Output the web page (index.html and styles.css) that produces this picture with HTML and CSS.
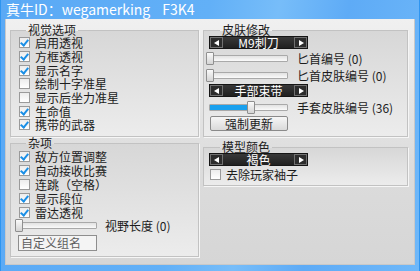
FILE: index.html
```html
<!DOCTYPE html>
<html lang="zh-CN">
<head>
  <meta charset="UTF-8">
  <title>真牛ID</title>
  <link rel="stylesheet" href="styles.css">
</head>
<body>
  <div class="window">
    <div class="titlebar"><span>真牛ID：wegamerking</span><span class="code">F3K4</span></div>

    <div class="client">
      <!-- Left column -->
      <div class="col col-left">
        <fieldset class="group group-visual">
          <legend>视觉选项</legend>
          <div class="check on"><span class="box"></span>启用透视</div>
          <div class="check on"><span class="box"></span>方框透视</div>
          <div class="check on"><span class="box"></span>显示名字</div>
          <div class="check"><span class="box"></span>绘制十字准星</div>
          <div class="check"><span class="box"></span>显示后坐力准星</div>
          <div class="check on"><span class="box"></span>生命值</div>
          <div class="check on"><span class="box"></span>携带的武器</div>
        </fieldset>

        <fieldset class="group group-misc">
          <legend>杂项</legend>
          <div class="check on"><span class="box"></span>敌方位置调整</div>
          <div class="check on"><span class="box"></span>自动接收比赛</div>
          <div class="check"><span class="box"></span>连跳（空格）</div>
          <div class="check on"><span class="box"></span>显示段位</div>
          <div class="check on"><span class="box"></span>雷达透视</div>
          <div class="slider-row range-view">
            <div class="slider"><span class="thumb"></span></div>
            <span class="slider-label">视野长度 (0)</span>
          </div>
          <div class="textbox">自定义组名</div>
        </fieldset>
      </div>

      <!-- Right column -->
      <div class="col col-right">
        <fieldset class="group group-skin">
          <legend>皮肤修改</legend>
          <div class="spin"><span class="arrow left"></span><span class="spin-value">M9刺刀</span><span class="arrow right"></span></div>
          <div class="slider-row wide">
            <div class="slider"><span class="thumb"></span></div>
            <span class="slider-label">匕首编号 (0)</span>
          </div>
          <div class="slider-row wide">
            <div class="slider"><span class="thumb"></span></div>
            <span class="slider-label">匕首皮肤编号 (0)</span>
          </div>
          <div class="spin spin-second"><span class="arrow left"></span><span class="spin-value">手部束带</span><span class="arrow right"></span></div>
          <div class="slider-row gloves">
            <div class="slider"><span class="fill" style="width: 37px"></span><span class="thumb" style="left: 37px"></span></div>
            <span class="slider-label">手套皮肤编号 (36)</span>
          </div>
          <button class="btn">强制更新</button>
        </fieldset>

        <fieldset class="group group-color">
          <legend>模型颜色</legend>
          <div class="spin"><span class="arrow left"></span><span class="spin-value">褐色</span><span class="arrow right"></span></div>
          <div class="check"><span class="box"></span>去除玩家袖子</div>
        </fieldset>
      </div>
    </div>
  </div>
</body>
</html>
```

FILE: styles.css
```css
* {
  box-sizing: border-box;
  margin: 0;
  padding: 0;
}

body {
  width: 420px;
  height: 271px;
  overflow: hidden;
  background: #3a9cf2;
  font-family: "Noto Sans CJK SC", "Liberation Sans", sans-serif;
  font-size: 12px;
  line-height: 13px;
  color: #1c1c1c;
}

.window {
  width: 420px;
  height: 271px;
  display: flex;
  flex-direction: column;
  padding: 0 4px 6px 4px;
  background: linear-gradient(100deg, #5aa9f5 0%, #62b0f7 45%, #77bdf9 60%, #5eabf6 75%, #6fb8f9 100%);
  border-left: 1px solid #2e95f0;
  border-right: 1px solid #2e95f0;
}

.titlebar {
  display: flex;
  height: 19px;
  line-height: 19px;
  padding-left: 1px;
  color: #ffffff;
  font-size: 14px;
  white-space: nowrap;
}

.titlebar .code {
  margin-left: 12px;
}

.client {
  flex: 1;
  display: flex;
  gap: 4px;
  padding: 5px 6px 0 4px;
  background: linear-gradient(to bottom, #f0f0f0, #dcdcdc 60%, #d6d6d6);
  border: 1px solid #c9c9c9;
  border-top: none;
}

.col {
  display: flex;
  flex-direction: column;
}

.col-left {
  width: 189px;
}

.col-right {
  flex: 1;
}

/* group boxes */
.group {
  border: 1px solid #c2c2c2;
  box-shadow: 1px 1px 0 #f6f6f6;
  background: linear-gradient(to bottom, #d7d7d7, #ececec);
  padding: 0 0 0 4px;
  min-width: 0;
}

.group legend {
  margin-left: 11px;
  padding: 0 2px;
  line-height: 12px;
  font-size: 12px;
}

.group-visual {
  height: 113px;
}

.group-misc {
  height: 120px;
}

.group-skin {
  height: 113px;
  padding-left: 5px;
}

.group-color {
  height: 45px;
  margin-top: 4px;
  padding-left: 5px;
}

/* checkboxes */
.check {
  display: flex;
  align-items: center;
  gap: 5px;
  height: 13.7px;
  padding-left: 4px;
  white-space: nowrap;
}

.group-misc .check {
  height: 13.8px;
}

.group-misc .check:first-of-type {
  margin-top: 1px;
}

.box {
  position: relative;
  width: 11px;
  height: 11px;
  flex: none;
  border: 1px solid #9a9a9a;
  background: linear-gradient(to bottom, #ececec, #ffffff);
}

.check.on .box::after {
  content: "";
  position: absolute;
  left: 2px;
  top: 0;
  width: 3px;
  height: 6px;
  border-right: 2px solid #1b8fe6;
  border-bottom: 2px solid #1b8fe6;
  transform: rotate(40deg);
}

.group-color .check {
  margin-top: 2px;
  padding-left: 1px;
}

/* sliders */
.slider-row {
  display: flex;
  align-items: center;
  height: 13px;
  white-space: nowrap;
}

.slider {
  position: relative;
  width: 82px;
  height: 7px;
  border: 1px solid #a9a9a9;
  border-radius: 1px;
  background: linear-gradient(to bottom, #e2e2e2, #fafafa);
  flex: none;
}

.thumb {
  position: absolute;
  left: -1px;
  top: -4px;
  width: 8px;
  height: 13px;
  border: 1px solid #8f8f8f;
  border-radius: 1px;
  background: linear-gradient(to bottom, #fafafa, #d4d4d4);
}

.fill {
  position: absolute;
  left: 0;
  top: 0;
  bottom: 0;
  background: #19a0ee;
}

.slider-label {
  margin-left: 8px;
}

.wide {
  margin-left: -3px;
  margin-top: 3px;
}

.wide + .wide {
  margin-top: 4px;
}

.wide .slider-label,
.gloves .slider-label {
  margin-left: 9px;
}

.gloves {
  margin-top: 4px;
}

.gloves .slider {
  width: 79px;
}

.textbox {
  width: 79px;
  height: 16px;
  margin: 3px 0 0 3px;
  padding-left: 2px;
  border: 1px solid #8e8e8e;
  background: #f4f4f4;
  color: #5e5e5e;
  line-height: 14px;
}

/* spinners */
.spin {
  display: flex;
  width: 99px;
  height: 13px;
  border: 1px solid #151515;
  background: linear-gradient(to bottom, #383838, #202020);
  color: #ffffff;
}

.spin-second {
  margin-top: 2px;
}

.spin-value {
  flex: 1;
  text-align: center;
  line-height: 11px;
}

.arrow {
  position: relative;
  width: 13px;
  border: 1px solid #707070;
  background: #2c2c2c;
}

.arrow::after {
  content: "";
  position: absolute;
  top: 2px;
  border-top: 3.5px solid transparent;
  border-bottom: 3.5px solid transparent;
}

.arrow.left::after {
  left: 3px;
  border-right: 5px solid #ffffff;
}

.arrow.right::after {
  left: 4px;
  border-left: 5px solid #ffffff;
}

/* button */
.btn {
  display: block;
  width: 78px;
  height: 15px;
  margin-top: 2px;
  margin-left: 1px;
  border: 1px solid #8a8a8a;
  border-radius: 2px;
  background: linear-gradient(to bottom, #f6f6f6, #dadada);
  font-family: inherit;
  font-size: 12px;
  line-height: 13px;
  color: #1c1c1c;
}
```
